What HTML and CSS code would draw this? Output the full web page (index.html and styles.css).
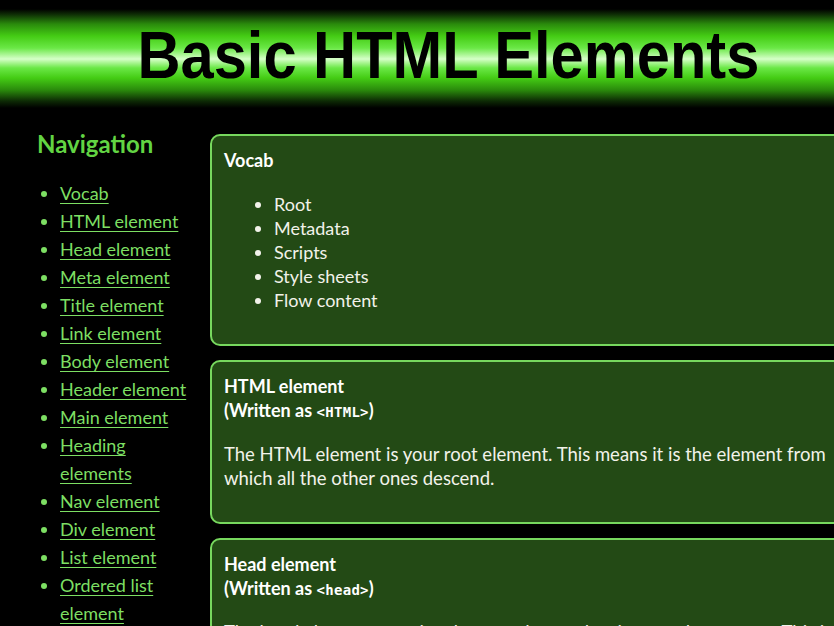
FILE: index.html
```html
<!DOCTYPE html>
<html lang="en">
<head>
<meta charset="utf-8">
<title>Basic HTML Elements</title>
<link rel="stylesheet" href="styles.css">
</head>
<body>
<div class="page">
  <header class="banner">
    <h1 class="banner-title"><span class="banner-text">Basic HTML Elements</span></h1>
  </header>
  <div class="layout">
    <nav class="sidenav">
      <h2 class="sidenav-title">Navigation</h2>
      <ul class="sidenav-list">
        <li><a href="#vocab">Vocab</a></li>
        <li><a href="#html">HTML element</a></li>
        <li><a href="#head">Head element</a></li>
        <li><a href="#meta">Meta element</a></li>
        <li><a href="#title">Title element</a></li>
        <li><a href="#link">Link element</a></li>
        <li><a href="#body">Body element</a></li>
        <li><a href="#header">Header element</a></li>
        <li><a href="#main">Main element</a></li>
        <li><a href="#heading">Heading elements</a></li>
        <li><a href="#nav">Nav element</a></li>
        <li><a href="#div">Div element</a></li>
        <li><a href="#list">List element</a></li>
        <li><a href="#ol">Ordered list element</a></li>
      </ul>
    </nav>
    <main class="content">
      <section class="panel" id="vocab">
        <h3 class="panel-title">Vocab</h3>
        <ul class="panel-list">
          <li>Root</li>
          <li>Metadata</li>
          <li>Scripts</li>
          <li>Style sheets</li>
          <li>Flow content</li>
        </ul>
      </section>
      <section class="panel" id="html">
        <h3 class="panel-title">HTML element<br>(Written as <code class="tag">&lt;HTML&gt;</code>)</h3>
        <p class="panel-text">The HTML element is your root element. This means it is the element from which all the other ones descend.</p>
      </section>
      <section class="panel" id="head">
        <h3 class="panel-title">Head element<br>(Written as <code class="tag">&lt;head&gt;</code>)</h3>
        <p class="panel-text">The head element contains the metadata and scripts used on a page. This is where the title and links to style sheets go.</p>
      </section>
    </main>
  </div>
</div>
</body>
</html>
```
FILE: styles.css
```css
html, body {
  margin: 0;
  padding: 0;
  background: #000;
  overflow: hidden;
}

.page {
  width: 896px;
  font-family: Lato, "Open Sans", sans-serif;
}

.banner {
  height: 108px;
  display: flex;
  align-items: center;
  justify-content: center;
  background: linear-gradient(to bottom,
    #000 0px, #000 9px,
    #0d2a05 14px,
    #2a8a0c 24px,
    #44cc14 36px,
    #6ae846 48px,
    #d6ffc8 59px,
    #6ae846 68px,
    #44cc14 78px,
    #2a8a0c 90px,
    #0d2a05 101px,
    #000 108px);
}

.banner-title {
  margin: 0;
  font-family: "Liberation Sans", Arial, sans-serif;
  font-weight: bold;
  font-size: 67px;
  line-height: 1;
  color: #000;
}

.banner-text {
  display: inline-block;
  transform: scaleX(0.89);
}

.layout {
  display: flex;
  align-items: flex-start;
  padding-top: 26px;
}

.sidenav {
  width: 156px;
  padding-left: 37px;
  flex-shrink: 0;
  margin-right: 17px;
}

.sidenav-title {
  margin: 0 0 25px 0;
  font-size: 24px;
  line-height: 20px;
  font-weight: bold;
  color: #62d443;
}

.sidenav-list {
  margin: 0;
  padding-left: 23px;
  color: #7ddf63;
  font-size: 18px;
  line-height: 28px;
}

.sidenav-list a {
  color: #7ddf63;
  text-decoration: underline;
  text-underline-offset: 3px;
}

.content {
  width: 646px;
  display: flex;
  flex-direction: column;
  gap: 14px;
}

.panel {
  background: #234a15;
  border: 2px solid #77d85e;
  border-radius: 10px;
  padding: 12px 14px 14px 12px;
  color: #f2f2ea;
}

.panel-title {
  margin: 0 0 20px 0;
  font-size: 18px;
  line-height: 24px;
  font-weight: bold;
  color: #fff;
}

.tag {
  font-family: "DejaVu Sans Mono", "Liberation Mono", monospace;
  font-size: 14px;
  line-height: 0;
  font-weight: bold;
  letter-spacing: 0.3px;
}

.panel-list {
  margin: 0 0 18px 0;
  padding-left: 50px;
  font-size: 18px;
  line-height: 24px;
}

.panel-text {
  margin: 0 0 18px 0;
  font-size: 18.5px;
  line-height: 24px;
}
```
